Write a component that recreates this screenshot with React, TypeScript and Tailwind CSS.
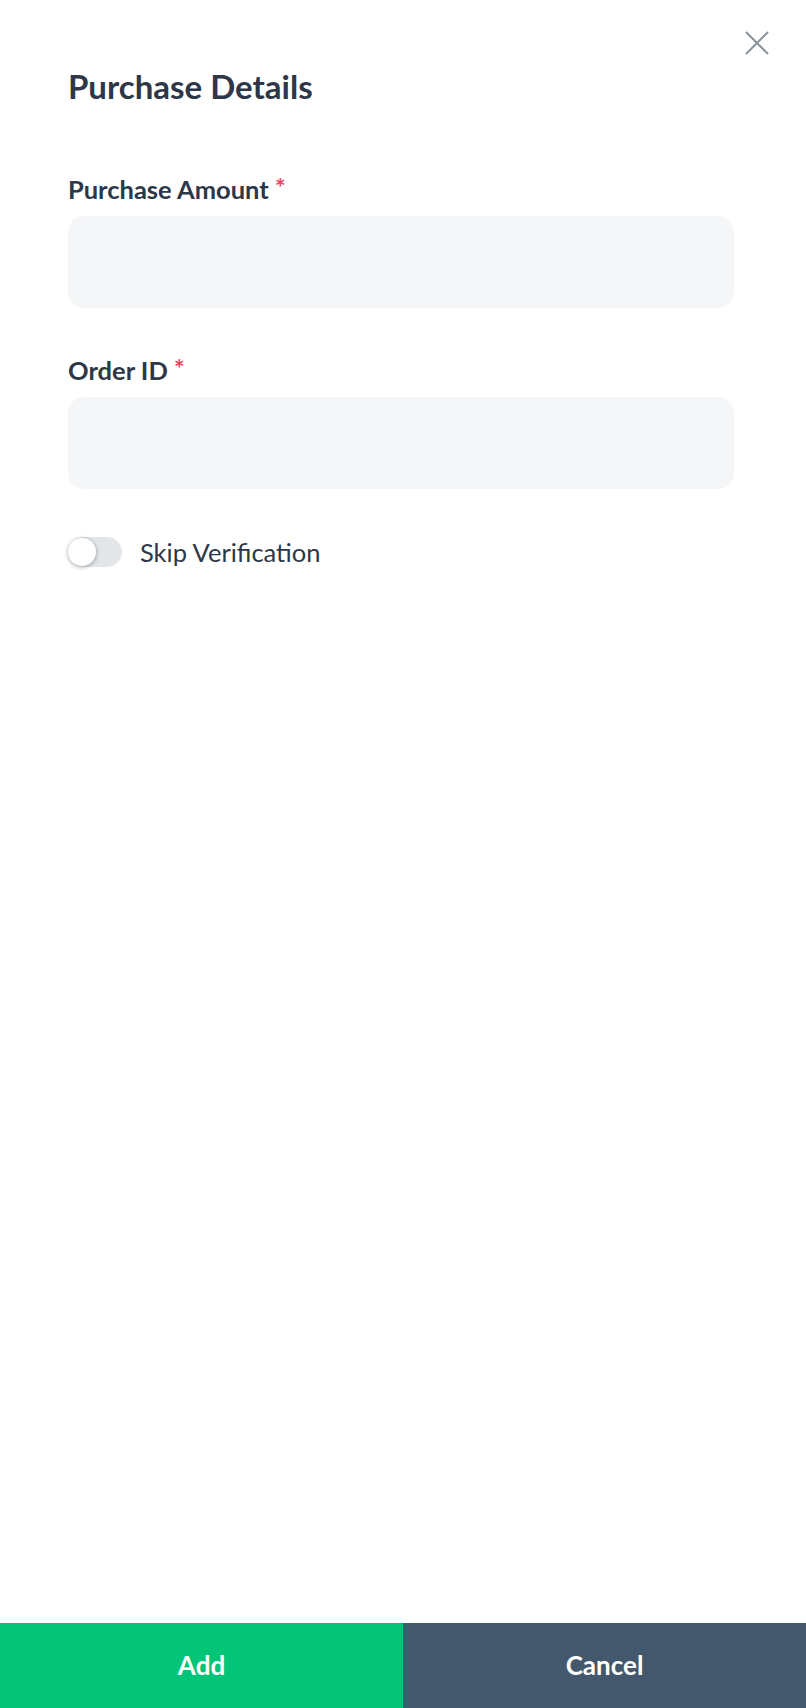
function Field({ label }: { label: string }) {
  return (
    <div className="flex flex-col gap-[12px]">
      <div className="text-[25.5px] leading-[30px] font-bold text-[#2d3748]">
        {label} <span className="relative -top-[2px] text-[25px] leading-none text-[#e8435f]">*</span>
      </div>
      <div className="h-[92px] rounded-[16px] bg-[#f5f6f8]" />
    </div>
  );
}

export default function App() {
  return (
    <div
      className="relative flex flex-col h-[1708px] bg-white"
      style={{ fontFamily: "Lato, 'Open Sans', sans-serif" }}
    >
      <button className="absolute top-[31px] right-[37px]">
        <svg width="24" height="24" viewBox="0 0 24 24" fill="none" stroke="#8a949e" strokeWidth="2">
          <path d="M1 1L23 23M23 1L1 23" />
        </svg>
      </button>
      <div className="flex-1 pl-[68px] pr-[72px] pt-[66px]">
        <h1 className="text-[33px] leading-[40px] font-bold text-[#2d3748]">Purchase Details</h1>
        <div className="mt-[68px] flex flex-col gap-[47px]">
          <Field label="Purchase Amount" />
          <Field label="Order ID" />
        </div>
        <div className="mt-[44px] flex items-center gap-[18px]">
          <div className="relative w-[54px] h-[30px] rounded-full bg-[#e2e6e9]">
            <div className="absolute left-0 top-px w-[28px] h-[28px] rounded-full bg-white shadow-[0_1px_4px_rgba(0,0,0,0.35)]" />
          </div>
          <span className="text-[25.5px] text-[#2d3748]">Skip Verification</span>
        </div>
      </div>
      <div className="flex h-[85px]">
        <button className="flex-1 bg-[#04c477] text-white text-[26px] font-bold">Add</button>
        <button className="flex-1 bg-[#43586d] text-white text-[26px] font-bold">Cancel</button>
      </div>
    </div>
  );
}
